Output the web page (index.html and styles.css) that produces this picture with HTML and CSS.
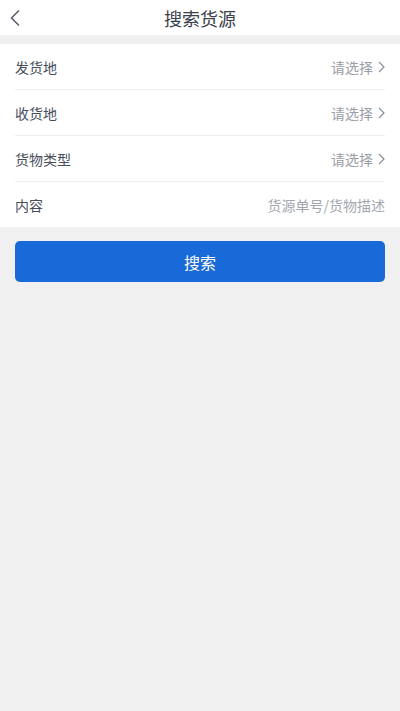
FILE: index.html
```html
<!DOCTYPE html>
<html lang="zh-CN">
<head>
  <meta charset="UTF-8">
  <meta name="viewport" content="width=device-width, initial-scale=1.0">
  <title>搜索货源</title>
  <link rel="stylesheet" href="styles.css">
</head>
<body>

<div class="header">
  <span class="back">
    <svg width="12" height="18" viewBox="0 0 12 18"><path d="M10 1.5 L2.5 9 L10 16.5" fill="none" stroke="#555b66" stroke-width="1.5"/></svg>
  </span>
  <h1>搜索货源</h1>
</div>

<div class="form">
  <div class="row">
    <span class="label">发货地</span>
    <span class="value">请选择<svg class="arrow" width="7" height="12" viewBox="0 0 7 12"><path d="M1 1 L6 6 L1 11" fill="none" stroke="#8a8f98" stroke-width="1.2"/></svg></span>
  </div>
  <div class="row">
    <span class="label">收货地</span>
    <span class="value">请选择<svg class="arrow" width="7" height="12" viewBox="0 0 7 12"><path d="M1 1 L6 6 L1 11" fill="none" stroke="#8a8f98" stroke-width="1.2"/></svg></span>
  </div>
  <div class="row">
    <span class="label">货物类型</span>
    <span class="value">请选择<svg class="arrow" width="7" height="12" viewBox="0 0 7 12"><path d="M1 1 L6 6 L1 11" fill="none" stroke="#8a8f98" stroke-width="1.2"/></svg></span>
  </div>
  <div class="row">
    <span class="label">内容</span>
    <input class="input" type="text" placeholder="货源单号/货物描述">
  </div>
</div>

<div class="actions">
  <button class="button">搜索</button>
</div>

</body>
</html>
```

FILE: styles.css
```css
body {
  font-family: "Noto Sans CJK SC", "Noto Sans", sans-serif;
  margin: 0;
  padding: 0;
  background-color: #f0f0f0;
  height: 711px;
}
.header {
  position: relative;
  height: 35px;
  background-color: #fff;
  display: flex;
  align-items: center;
  justify-content: center;
}
.header h1 {
  margin: 0;
  font-size: 18px;
  font-weight: normal;
  color: #3a404c;
}
.back {
  position: absolute;
  left: 9px;
  top: 8px;
}
.form {
  margin-top: 9px;
  background-color: #fff;
  padding: 0 15px;
}
.row {
  height: 45px;
  display: flex;
  align-items: center;
  justify-content: space-between;
  border-bottom: 1px solid #eeeeee;
}
.row:last-child {
  border-bottom: none;
}
.label {
  font-size: 14px;
  color: #474d5a;
}
.value {
  font-size: 14px;
  color: #9a9ea6;
  display: flex;
  align-items: center;
}
.arrow {
  margin-left: 5px;
}
.input {
  border: none;
  outline: none;
  text-align: right;
  font-family: inherit;
  font-size: 14px;
  padding: 0;
  width: 200px;
  color: #333;
}
.input::placeholder {
  color: #a3a7ae;
}
.actions {
  padding: 14px 15px;
}
.button {
  width: 100%;
  height: 41px;
  border: none;
  border-radius: 5px;
  background-color: #1a69d9;
  color: #fff;
  font-family: inherit;
  font-size: 16px;
  cursor: pointer;
}
```
